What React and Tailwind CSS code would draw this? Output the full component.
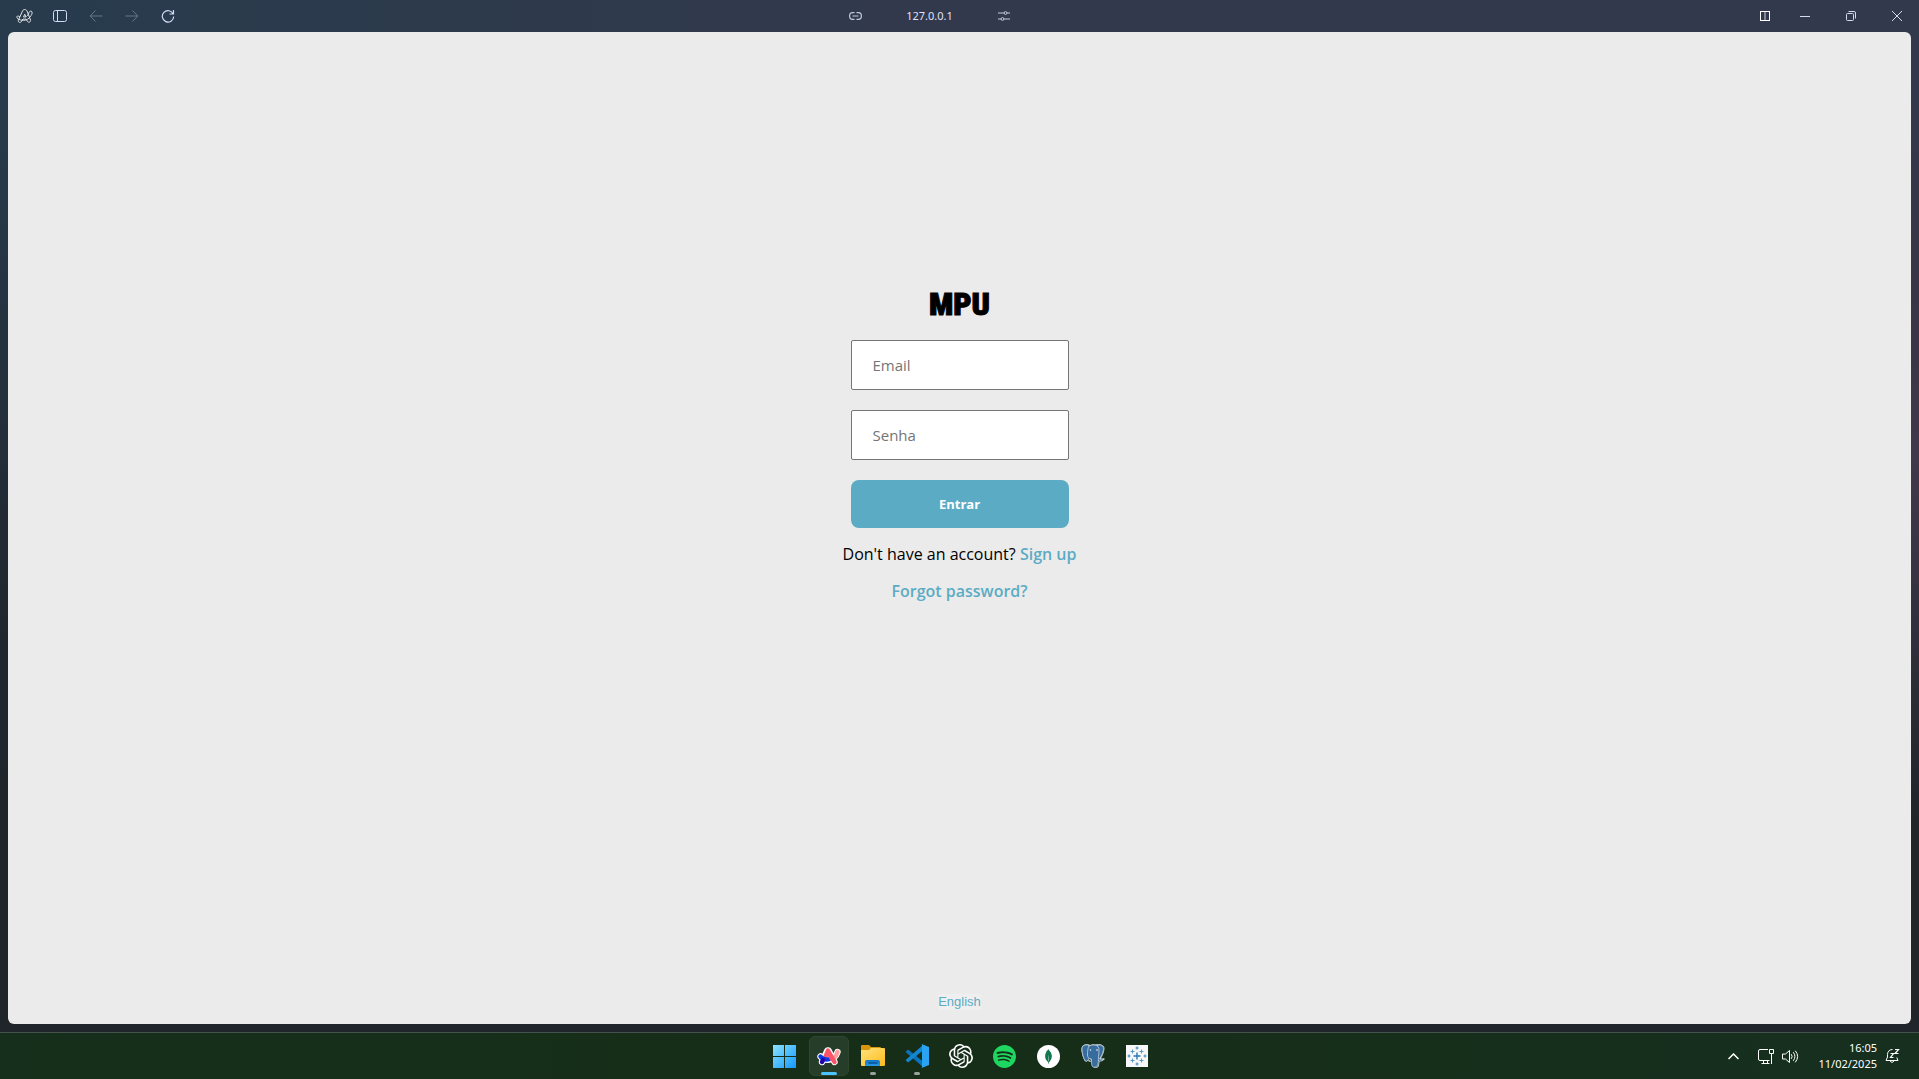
import { SiOpenai, SiSpotify, SiMongodb, SiPostgresql } from "react-icons/si";

function ArcGlyph() {
  return (
    <svg width="17" height="14" viewBox="0 0 34 28" fill="none" stroke="currentColor" strokeWidth="2" strokeLinejoin="round">
      <path d="M13 4c1.500-4 7-4 9 0l7 18c1 4-4 6-6 3l-3-5c-2 .6-4 .6-6 0l-3 5c-3 4-8 1-6-3z" />
      <path d="M8 16c-3-2-5-3-6-1s1 5 4 6c8 3 17 2 22-5 3-4 5-7 4-10s-5-2-6 1c-1 4-3 6-5 8" />
      <path d="M17.500 10.500 15 16h5z" />
    </svg>
  );
}

function SidebarIcon() {
  return (
    <svg width="14" height="12" viewBox="0 0 14 12" fill="none" stroke="currentColor">
      <rect x=".5" y=".5" width="13" height="11" rx="2" />
      <path d="M4.500 1v10" />
    </svg>
  );
}

function ArrowIcon({ flip }) {
  return (
    <svg className={flip ? "rotate-180" : ""} width="14" height="12" viewBox="0 0 14 12" fill="none" stroke="currentColor">
      <path d="M1.500 6h12M6.500 .5 1.200 6l5.300 5.500" />
    </svg>
  );
}

function ReloadIcon() {
  return (
    <svg width="14" height="14" viewBox="0 0 14 14" fill="none" stroke="currentColor" strokeWidth="1.200">
      <path d="M12.200 5A5.700 5.700 0 1 0 12.700 7.500M12.500 1v4H8.500" />
    </svg>
  );
}

function LinkIcon() {
  return (
    <svg width="13" height="8" viewBox="0 0 13 8" fill="none" stroke="currentColor" strokeWidth="1.200">
      <path d="M5.500 .6H3.600q-3 0-3 3.400t3 3.400H5.500M7.500 .6h1.900q3 0 3 3.400t-3 3.400H7.500M3.500 4h6" />
    </svg>
  );
}

function SlidersIcon() {
  return (
    <svg width="12" height="10" viewBox="0 0 12 10" fill="none" stroke="currentColor">
      <path d="M0 2h6M9 2h3M0 8h3M6 8h6" strokeWidth="1.200" />
      <circle cx="7.500" cy="2" r="1.400" />
      <circle cx="4.500" cy="8" r="1.400" />
    </svg>
  );
}

function SplitIcon() {
  return (
    <svg width="10" height="10" viewBox="0 0 10 10" fill="none" stroke="#fff">
      <rect x=".5" y=".5" width="9" height="9" />
      <path d="M5 1v8" strokeOpacity=".8" />
    </svg>
  );
}

function RestoreIcon() {
  return (
    <svg width="10" height="10" viewBox="0 0 10 10" fill="none" stroke="currentColor">
      <rect x=".5" y="2.500" width="7" height="7" rx="1" />
      <path d="M2.500.5H8A1.500 1.500 0 0 1 9.500 2v5.500" />
    </svg>
  );
}

function CloseIcon() {
  return (
    <svg width="10" height="10" viewBox="0 0 10 10" stroke="currentColor">
      <path d="M0 0l10 10M10 0L0 10" />
    </svg>
  );
}

function WindowsLogo() {
  return (
    <svg width="23" height="23" viewBox="0 0 23 23">
      <defs>
        <linearGradient id="win" x1="0" y1="0" x2="1" y2="1" gradientUnits="objectBoundingBox">
          <stop offset="0" stopColor="#8be3ff" />
          <stop offset="1" stopColor="#1497fb" />
        </linearGradient>
      </defs>
      <path d="M0 0h11v11H0zM12 0h11v11H12zM0 12h11v11H0zM12 12h11v11H12z" fill="url(#win)" />
    </svg>
  );
}

function ArcLogo() {
  return (
    <svg width="24" height="20" viewBox="0 0 24 20" fill="none" strokeLinecap="round" strokeLinejoin="round">
      <g stroke="#fff" strokeWidth="6.400">
        <path d="M5 16 10.500 4.500h1L17.500 16" />
        <path d="M3.500 10.500c4 5 14 4.500 17-4.500" />
      </g>
      <path d="M8 10h8v5H8z" fill="#fff" />
      <path d="M20.500 6C19.800 9 18.500 11 16.500 12.500" stroke="#ff9b9e" strokeWidth="4.400" />
      <path d="M8.500 10.500 11 4.500l6.500 11.500" stroke="#fb5468" strokeWidth="4.400" />
      <path d="M3.500 10.500c2 2.500 5.500 3.500 9 2.500" stroke="#0839e8" strokeWidth="4.400" />
      <path d="M5 16 6 14" stroke="#2404aa" strokeWidth="4.400" />
      <path d="M12.500 8.500l2.500 4.500" stroke="#fb5468" strokeWidth="4.400" />
    </svg>
  );
}

function FolderIcon() {
  return (
    <svg width="24" height="22" viewBox="0 0 24 22">
      <defs>
        <linearGradient id="fold" x1="0" y1="0" x2="1" y2="1">
          <stop offset="0" stopColor="#ffe17c" />
          <stop offset="1" stopColor="#fdbc1d" />
        </linearGradient>
        <linearGradient id="foldBlue" x1="0" y1="0" x2="0" y2="1">
          <stop offset="0" stopColor="#0e74c8" />
          <stop offset="1" stopColor="#2b9ae6" />
        </linearGradient>
      </defs>
      <path d="M0 1q0-1 1-1h7l2 2h9q1 0 1 1v5H0z" fill="#d9950b" />
      <path d="M0 5h8l2-2h13q1 0 1 1v16q0 1-1 1H1q-1 0-1-1z" fill="url(#fold)" />
      <path d="M4 21v-4q0-2 2-2h11q2 0 2 2v4z" fill="url(#foldBlue)" />
      <path d="M8 18h8" stroke="#075393" strokeWidth="1.500" strokeLinecap="round" />
    </svg>
  );
}

function CodeIcon() {
  return (
    <svg width="24" height="24" viewBox="0 0 24 24">
      <path d="M1 7.300 2.500 6q.6-.4 1.200 0L18 17.500V23L.9 8.200Q.4 7.700 1 7.300z" fill="#0b73bd" />
      <path d="M1 16.700 2.500 18q.6.4 1.200 0L18 6.500V1L.9 15.800q-.5.500.1.900z" fill="#1485cf" />
      <path d="M17.300.3 24 3v18l-6.700 2.700q-.8.2-1.300-.4 1 .5 1.500-.8V1.500Q17 .2 16 .7q.5-.6 1.300-.4z" fill="#2ba3f3" />
      <path d="M17 1h1v22h-1z" fill="#2ba3f3" />
    </svg>
  );
}

function MongoIcon() {
  return (
    <span className="flex size-[23px] items-center justify-center rounded-full bg-white">
      <SiMongodb size={15} color="#12774f" />
    </span>
  );
}

function ElephantIcon() {
  return (
    <span className="relative flex size-6 items-center justify-center">
      <SiPostgresql size={24} color="#c9d5df" />
      <svg className="absolute inset-0" width="24" height="24" viewBox="0 0 24 24" fill="#376c9f" stroke="#c6d3de" strokeWidth=".8">
        <path d="M8 1.500C4 0 1 1.500 1 5c0 4 1.500 10 3.500 12 1.500 1 3-2 4-3V3z" />
        <path d="M16 1.500c4-1.500 7 .5 6.500 4-.4 3.500-2.500 7-4 9.500l4 .5c-1.500 2-4 2-6 1z" />
        <path d="M8 2c3-1.500 7-1.500 9 .5 1.500 2 1 7 .5 10-.3 4 .5 9-3 10.500-4 1-4-2-4-8-3 0-4-2-4-4 0-3 .2-7 1.500-9z" />
        <circle cx="9.500" cy="6" r=".5" fill="#fff" />
        <circle cx="16" cy="6" r=".5" fill="#fff" />
      </svg>
    </span>
  );
}

function TableauIcon() {
  return (
    <svg width="22" height="22" viewBox="0 0 22 22" fill="none">
      <path fill="#f5f7f8" d="M0 0h22v22H0z" />
      <path d="M11 7.500v7M7.500 11h7" stroke="#2878b8" strokeWidth="1.400" />
      <path d="M6.500 4.500v4M4.500 6.500h4M15.500 4.500v4M13.500 6.500h4M6.500 13.500v4M4.500 15.500h4M15.500 13.500v4M13.500 15.500h4" stroke="#5b98c4" />
      <path d="M11 1.500v3M9.500 3h3M11 17.500v3M9.500 19h3M3 9.500v3M1.500 11h3M19 9.500v3M17.500 11h3" stroke="#3f83b8" />
    </svg>
  );
}

function MonitorIcon() {
  return (
    <svg width="17" height="17" viewBox="0 0 17 17" fill="none" stroke="#fff">
      <path d="M10 1.500H2q-1.500 0-1.500 1.500v8q0 1.500 1.500 1.500h9.500M5.500 13v2.500M9.500 13v2.500M3.500 15.500h8" />
      <path d="M11.500 1.500h4v4h-4zM13.500 6v10" />
    </svg>
  );
}

function SpeakerIcon() {
  return (
    <svg width="17" height="15" viewBox="0 0 17 15" fill="none" stroke="#fff" strokeLinejoin="round">
      <path d="M.5 5H3.500L7.500 1.500v12L3.500 10H.5z" />
      <path d="M9.500 5.500q1.500 2 0 4M11.500 3.500q3 4 0 8M13.500 2q4.500 5.500 0 11" strokeLinecap="round" />
    </svg>
  );
}

function BellIcon() {
  return (
    <svg width="15" height="16" viewBox="0 0 15 16" fill="none" stroke="#fff">
      <path d="M7.500 1.500C4 1.500 2.500 4 2.500 6.500V9L1 12.500h12L11.800 9.500M5 13q2 3 4 0" strokeLinejoin="round" />
      <path d="M5.500 5.500h3l-3 4h3M10 1.500h3.500l-3.500 4h3.500" strokeWidth="1.200" />
    </svg>
  );
}

function ToolButton({ label, className = "", children }) {
  return (
    <button aria-label={label} className={`flex h-8 w-9 items-center justify-center ${className}`}>
      {children}
    </button>
  );
}

const apps = [
  { name: "Start", icon: <WindowsLogo /> },
  { name: "Arc", icon: <ArcLogo />, state: "active" },
  { name: "File Explorer", icon: <FolderIcon />, state: "open" },
  { name: "Visual Studio Code", icon: <CodeIcon />, state: "open" },
  { name: "ChatGPT", icon: <SiOpenai size={24} color="#fff" /> },
  { name: "Spotify", icon: <SiSpotify size={23} color="#1ed760" /> },
  { name: "MongoDB", icon: <MongoIcon /> },
  { name: "PostgreSQL", icon: <ElephantIcon /> },
  { name: "Tableau", icon: <TableauIcon /> },
];

function TitleBar() {
  return (
    <header className="grid h-8 grid-cols-[1fr_auto_1fr] items-center text-[#d5d9f5]">
      <div className="flex pl-1.5">
        <ToolButton label="Arc menu" className="text-[#e2e2e2]"><ArcGlyph /></ToolButton>
        <ToolButton label="Toggle sidebar"><SidebarIcon /></ToolButton>
        <ToolButton label="Back" className="text-[#69768a]"><ArrowIcon /></ToolButton>
        <ToolButton label="Forward" className="text-[#69768a]"><ArrowIcon flip /></ToolButton>
        <ToolButton label="Reload"><ReloadIcon /></ToolButton>
      </div>
      <div className="flex items-center pr-15 text-[#c3c9e2]">
        <ToolButton label="Copy link"><LinkIcon /></ToolButton>
        <span className="w-28 text-center font-['Noto_Sans',sans-serif] text-[11px] text-[#dfe2fa]">127.0.0.1</span>
        <ToolButton label="Site settings"><SlidersIcon /></ToolButton>
      </div>
      <div className="flex justify-end">
        <ToolButton label="Split view"><SplitIcon /></ToolButton>
        <button aria-label="Minimize" className="flex h-8 w-11 items-center justify-center"><span className="h-px w-2.5 bg-current" /></button>
        <button aria-label="Restore" className="flex h-8 w-12 items-center justify-center"><RestoreIcon /></button>
        <button aria-label="Close" className="flex h-8 w-11 items-center justify-center"><CloseIcon /></button>
      </div>
    </header>
  );
}

function LoginPage() {
  const field =
    "h-[50px] w-full rounded-xs border border-[#767676] bg-white px-[21px] text-[15px] text-black placeholder:text-[#757575]";
  return (
    <main className="mx-2 flex flex-1 flex-col items-center rounded-md bg-[#ebebeb] pt-64 font-['Open_Sans',sans-serif]">
      <h1 className="font-['Roboto_Condensed','Roboto',sans-serif] text-[32px] leading-8 font-black text-black [-webkit-text-stroke:1px_black]">MPU</h1>
      <form className="mt-5 flex w-[218px] flex-col gap-5" onSubmit={(e) => e.preventDefault()}>
        <input type="email" aria-label="Email" placeholder="Email" className={field} />
        <input type="password" aria-label="Senha" placeholder="Senha" className={field} />
        <button className="h-12 rounded-lg bg-[#5cabc4] pt-0.5 text-[13px] font-bold text-white">Entrar</button>
      </form>
      <p className="mt-3.5 text-base text-black">
        Don't have an account? <a href="#signup" className="font-semibold text-[#5cabc4]">Sign up</a>
      </p>
      <a href="#forgot" className="mt-[13px] text-base font-semibold text-[#5cabc4]">Forgot password?</a>
      <button className="mt-auto mb-3.5 bg-[#efefef] font-['Liberation_Sans',sans-serif] text-[13px] leading-4 text-[#5cabc4]">English</button>
    </main>
  );
}

function Taskbar() {
  return (
    <footer className="mt-2 grid h-[47px] grid-cols-[1fr_auto_1fr] items-center border-t border-[#46504c] bg-linear-to-r from-[#162f1c] via-[#162e17] to-[#162f1f]">
      <div />
      <nav className="flex gap-1 pl-0.5">
        {apps.map(({ name, icon, state }) => (
          <button
            key={name}
            aria-label={name}
            className={`relative flex size-10 items-center justify-center rounded-md border ${state === "active" ? "border-[#30452f] bg-[#263d29]" : "border-transparent"}`}
          >
            {icon}
            {state === "active" && <span className="absolute bottom-0 h-[3px] w-4 rounded-full bg-[#4cc2ff]" />}
            {state === "open" && <span className="absolute bottom-0 h-[3px] w-1.5 rounded-full bg-[#9aa39b]" />}
          </button>
        ))}
      </nav>
      <div className="flex items-center justify-end pr-[19px] text-white">
        <button aria-label="Hidden icons" className="mr-[19px]">
          <svg width="11" height="7" viewBox="0 0 11 7" fill="none" stroke="#fff" strokeWidth="1.500"><path d="M.5 6 5.500 1l5 5" /></svg>
        </button>
        <button aria-label="Network and volume" className="mr-[19px] flex items-center gap-[7px]">
          <MonitorIcon />
          <SpeakerIcon />
        </button>
        <button className="mr-2 text-right font-['Noto_Sans',sans-serif] text-[11px] leading-4">
          <span className="block">16:05</span>
          <span className="block">11/02/2025</span>
        </button>
        <button aria-label="Notifications"><BellIcon /></button>
      </div>
    </footer>
  );
}

export default function App() {
  return (
    <div className="flex h-screen flex-col bg-[radial-gradient(circle_at_100%_42%,#41384a,transparent_18%),linear-gradient(to_bottom,transparent_10%,#20262d_60%,#1f2429),linear-gradient(to_right,#273b4c,#33394c_50%,#33394c)]">
      <TitleBar />
      <LoginPage />
      <Taskbar />
    </div>
  );
}
